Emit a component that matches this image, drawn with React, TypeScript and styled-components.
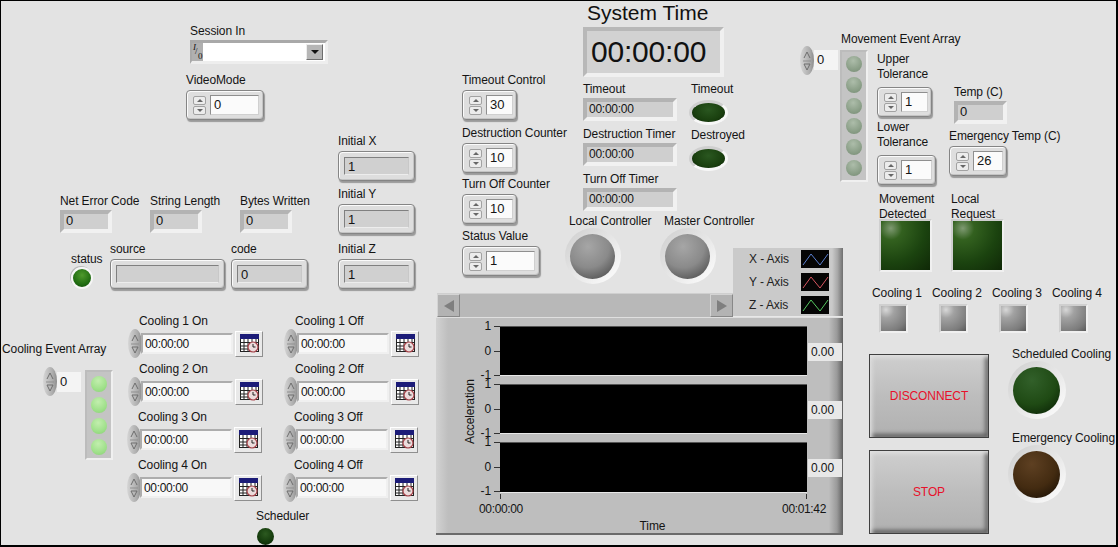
import React from 'react';
import styled, {createGlobalStyle} from 'styled-components';

const GlobalStyle = createGlobalStyle`
  html, body {
    margin: 0;
    padding: 0;
    background: #e3e3e3;
  }
  * {
    box-sizing: border-box;
  }
`;

function CalendarIcon() {
  return (
    <svg width="19" height="19" viewBox="0 0 19 19">
      <rect x="0.5" y="0.5" width="18" height="17" fill="#fff" stroke="#222" />
      <rect x="0" y="0" width="19" height="5" fill="#1c1c78" />
      <path
        d="M4 5v13M8 5v13M12 5v13M16 5v13M0 8.5h19M0 12h19M0 15h19"
        stroke="#222"
        strokeWidth="1"
      />
      <circle cx="13" cy="13" r="5" fill="#ecdcdc" stroke="#a8434a" strokeWidth="1.2" />
      <path d="M13 10v3h2.5" stroke="#222" strokeWidth="1" fill="none" />
    </svg>
  );
}

function Wave({color}: {color: string}) {
  return (
    <svg width="28" height="18" viewBox="0 0 28 18">
      <rect width="28" height="18" fill="#050505" />
      <path d="M2 15L10 4L19 15L27 4" stroke={color} strokeWidth="1" fill="none" />
    </svg>
  );
}

function Spin() {
  return (
    <SpinPair>
      <SpinCell>
        <UpArrow />
      </SpinCell>
      <SpinCell>
        <DownArrow />
      </SpinCell>
    </SpinPair>
  );
}

function OvalSpin() {
  return (
    <OvalButton>
      <svg width="8" height="22" viewBox="0 0 8 22">
        <path d="M1 8L4 2L7 8M1 14H7L4 20L1 14" fill="none" stroke="#6e6e6e" strokeWidth="1" />
        <path d="M0 11H8" stroke="#8f8f8f" />
      </svg>
    </OvalButton>
  );
}

function Numeric({value, width, innerWidth}: {value: string; width: number; innerWidth: number}) {
  return (
    <NumericFrame $width={width}>
      <Spin />
      <NumericInner $width={innerWidth}>{value}</NumericInner>
    </NumericFrame>
  );
}

function Scheduled({label, inset}: {label: string; inset?: boolean}) {
  return (
    <ScheduleCell $inset={inset}>
      <ScheduleLabel>{label}</ScheduleLabel>
      <ScheduleRow>
        <OvalSpin />
        <TimeBox>00:00:00</TimeBox>
        <CalendarButton>
          <CalendarIcon />
        </CalendarButton>
      </ScheduleRow>
    </ScheduleCell>
  );
}

function Strip({value, $last}: {value: string; $last?: boolean}) {
  return (
    <StripRow $last={$last}>
      <AxisNumbers>
        <AxisNumber>1</AxisNumber>
        <AxisNumber>0</AxisNumber>
        <AxisNumber>-1</AxisNumber>
      </AxisNumbers>
      <PlotArea />
      <Readout>{value}</Readout>
    </StripRow>
  );
}

export default function App() {
  return (
    <Panel>
      <GlobalStyle />

      <LeftColumn>
        <LeftTop>
          <ErrorCluster>
            <SessionField>
              <Label>Session In</Label>
              <SessionControl>
                <IoTag>
                  <i>I</i>
                  <span>/</span>
                  <b>0</b>
                </IoTag>
                <SessionInput />
                <DropButton>
                  <DropArrow />
                </DropButton>
              </SessionControl>
            </SessionField>
            <VideoField>
              <Label>VideoMode</Label>
              <Numeric value="0" width={78} innerWidth={49} />
            </VideoField>
            <CodeRow>
              <CodeField>
                <Label>Net Error Code</Label>
                <Sunken $width={52} $height={23}>0</Sunken>
              </CodeField>
              <CodeField>
                <Label>String Length</Label>
                <Sunken $width={52} $height={23}>0</Sunken>
              </CodeField>
              <CodeField>
                <Label>Bytes Written</Label>
                <Sunken $width={52} $height={23}>0</Sunken>
              </CodeField>
            </CodeRow>
            <StatusRow>
              <StatusField>
                <Label>status</Label>
                <StatusLed />
              </StatusField>
              <SourceField>
                <Label>source</Label>
                <Raised $width={115}>
                  <RaisedText />
                </Raised>
              </SourceField>
              <Field>
                <Label>code</Label>
                <Raised $width={77}>
                  <RaisedText>0</RaisedText>
                </Raised>
              </Field>
            </StatusRow>
          </ErrorCluster>
          <InitialColumn>
            <Field>
              <Label>Initial X</Label>
              <Raised $width={77}>
                <RaisedText>1</RaisedText>
              </Raised>
            </Field>
            <Field $top={6}>
              <Label>Initial Y</Label>
              <Raised $width={77}>
                <RaisedText>1</RaisedText>
              </Raised>
            </Field>
            <Field $top={8}>
              <Label>Initial Z</Label>
              <Raised $width={77}>
                <RaisedText>1</RaisedText>
              </Raised>
            </Field>
          </InitialColumn>
        </LeftTop>

        <CoolingArea>
          <EventColumn>
            <EventLabel>Cooling Event Array</EventLabel>
            <EventRow>
              <OvalSpin />
              <IndexBox $top={5}>0</IndexBox>
              <ArrayFrame $top={3}>
                <ArrayLed $on />
                <ArrayLed $on />
                <ArrayLed $on />
                <ArrayLed $on />
              </ArrayFrame>
            </EventRow>
          </EventColumn>
          <ScheduleColumn>
            <ScheduleGrid>
              <Scheduled label="Cooling 1 On" />
              <Scheduled label="Cooling 1 Off" />
              <Scheduled label="Cooling 2 On" />
              <Scheduled label="Cooling 2 Off" />
              <Scheduled label="Cooling 3 On" inset />
              <Scheduled label="Cooling 3 Off" inset />
              <Scheduled label="Cooling 4 On" inset />
              <Scheduled label="Cooling 4 Off" inset />
            </ScheduleGrid>
            <SchedulerField>
              <Label>Scheduler</Label>
              <SchedulerLed />
            </SchedulerField>
          </ScheduleColumn>
        </CoolingArea>
      </LeftColumn>

      <MiddleColumn>
        <MiddleTop>
          <MiddleLeft>
            <ControlsRow>
              <CounterColumn>
                <Field>
                  <Label>Timeout Control</Label>
                  <Numeric value="30" width={55} innerWidth={27} />
                </Field>
                <Field $top={6}>
                  <Label>Destruction Counter</Label>
                  <Numeric value="10" width={55} innerWidth={27} />
                </Field>
                <Field $top={4}>
                  <Label>Turn Off Counter</Label>
                  <Numeric value="10" width={55} innerWidth={27} />
                </Field>
                <Field $top={5}>
                  <Label>Status Value</Label>
                  <Numeric value="1" width={78} innerWidth={49} />
                </Field>
              </CounterColumn>
              <TimerArea>
                <ClockTitle>System Time</ClockTitle>
                <ClockBox>00:00:00</ClockBox>
                <TimerRow>
                  <TimerColumn>
                    <TimerField>
                      <Label>Timeout</Label>
                      <Sunken $width={94} $height={23} $small>00:00:00</Sunken>
                    </TimerField>
                    <TimerField $top={6}>
                      <Label>Destruction Timer</Label>
                      <Sunken $width={94} $height={23} $small>00:00:00</Sunken>
                    </TimerField>
                    <TimerField $top={6}>
                      <Label>Turn Off Timer</Label>
                      <Sunken $width={94} $height={23} $small>00:00:00</Sunken>
                    </TimerField>
                  </TimerColumn>
                  <AlarmColumn>
                    <AlarmField>
                      <AlarmLabel>Timeout</AlarmLabel>
                      <OvalLed />
                    </AlarmField>
                    <AlarmField $top={3}>
                      <AlarmLabel>Destroyed</AlarmLabel>
                      <OvalLed />
                    </AlarmField>
                  </AlarmColumn>
                </TimerRow>
                <ControllerRow>
                  <ControllerField>
                    <ControllerLabel>Local Controller</ControllerLabel>
                    <RoundLed $size={56} $tone="gray" />
                  </ControllerField>
                  <ControllerField>
                    <ControllerLabel>Master Controller</ControllerLabel>
                    <RoundLed $size={56} $tone="gray" />
                  </ControllerField>
                </ControllerRow>
              </TimerArea>
            </ControlsRow>
            <ScrollBar>
              <ScrollButton>
                <ScrollArrow $left />
              </ScrollButton>
              <ScrollButton>
                <ScrollArrow />
              </ScrollButton>
            </ScrollBar>
          </MiddleLeft>
          <LegendColumn>
            <Legend>
              <LegendRow>
                <span>X - Axis</span>
                <Wave color="#5b7fd0" />
              </LegendRow>
              <LegendRow>
                <span>Y - Axis</span>
                <Wave color="#d85560" />
              </LegendRow>
              <LegendRow>
                <span>Z - Axis</span>
                <Wave color="#55c860" />
              </LegendRow>
            </Legend>
          </LegendColumn>
        </MiddleTop>

        <Graph>
          <AxisTitleColumn>
            <AxisTitle>Acceleration</AxisTitle>
          </AxisTitleColumn>
          <Strips>
            <Strip value="0.00" />
            <Strip value="0.00" />
            <Strip value="0.00" $last />
            <TimeTicks>
              <TimeTick />
              <TimeTick />
            </TimeTicks>
            <TimeLabels>
              <span>00:00:00</span>
              <span>00:01:42</span>
            </TimeLabels>
            <TimeTitle>Time</TimeTitle>
          </Strips>
        </Graph>
      </MiddleColumn>

      <RightColumn>
        <MovementRow>
          <MovementIndex>
            <OvalSpin />
            <IndexBox $top={4}>0</IndexBox>
          </MovementIndex>
          <MovementArray>
            <MovementLabel>Movement Event Array</MovementLabel>
            <ArrayFrame>
              <ArrayLed />
              <ArrayLed />
              <ArrayLed />
              <ArrayLed />
              <ArrayLed />
              <ArrayLed />
            </ArrayFrame>
          </MovementArray>
          <ToleranceColumn>
            <Field>
              <WrapLabel>Upper<br />Tolerance</WrapLabel>
              <Numeric value="1" width={55} innerWidth={27} />
            </Field>
            <Field $top={3}>
              <WrapLabel>Lower<br />Tolerance</WrapLabel>
              <Numeric value="1" width={59} innerWidth={31} />
            </Field>
          </ToleranceColumn>
          <TempColumn>
            <TempField>
              <Label>Temp (C)</Label>
              <Sunken $width={53} $height={23}>0</Sunken>
            </TempField>
            <Field $top={5}>
              <Label>Emergency Temp (C)</Label>
              <Numeric value="26" width={58} innerWidth={30} />
            </Field>
          </TempColumn>
        </MovementRow>

        <SquareRow>
          <SquareField>
            <SquareLabel>Movement<br />Detected</SquareLabel>
            <SquareLed $size={53} $green />
          </SquareField>
          <SquareField>
            <SquareLabel>Local<br />Request</SquareLabel>
            <SquareLed $size={53} $green />
          </SquareField>
        </SquareRow>

        <CoolingRow>
          {['Cooling 1', 'Cooling 2', 'Cooling 3', 'Cooling 4'].map((name) => (
            <CoolingCell key={name}>
              <Label>{name}</Label>
              <SquareLed $size={29} />
            </CoolingCell>
          ))}
        </CoolingRow>

        <ActionRow>
          <ButtonColumn>
            <BigButton>DISCONNECT</BigButton>
            <BigButton>STOP</BigButton>
          </ButtonColumn>
          <StateColumn>
            <StateField>
              <StateLabel>Scheduled Cooling</StateLabel>
              <RoundLed $size={58} $tone="green" />
            </StateField>
            <StateField $top={12}>
              <StateLabel>Emergency Cooling</StateLabel>
              <RoundLed $size={58} $tone="brown" />
            </StateField>
          </StateColumn>
        </ActionRow>
      </RightColumn>
    </Panel>
  );
}

const Panel = styled.div`
  display: flex;
  width: 1118px;
  height: 547px;
  overflow: hidden;
  background: #e3e3e3;
  border-top: 1px solid #000;
  border-left: 1px solid #000;
  border-bottom: 2px solid #000;
  border-right: 2px solid #000;
  font-family: 'Liberation Sans', Arial, sans-serif;
  font-size: 12px;
  letter-spacing: -0.1px;
  color: #141414;
`;

const Label = styled.div`
  height: 14px;
  line-height: 14px;
  white-space: nowrap;
`;

const WrapLabel = styled.div`
  height: 29px;
  line-height: 15px;
  white-space: nowrap;
  margin-bottom: 3px;
`;

const Field = styled.div<{$top?: number}>`
  display: flex;
  flex-direction: column;
  align-items: flex-start;
  gap: 3px;
  margin-top: ${(p) => p.$top ?? 0}px;
`;

const NumericFrame = styled.div<{$width: number}>`
  display: flex;
  align-items: center;
  gap: 4px;
  width: ${(p) => p.$width}px;
  height: 30px;
  padding-left: 6px;
  background: #dedede;
  border: 1px solid #858585;
  border-radius: 4px;
  box-shadow: inset 1px 1px 0 #fbfbfb, inset -1px -1px 0 #c4c4c4, 1px 2px 1px #9a9a9a;
`;

const NumericInner = styled.div<{$width: number}>`
  width: ${(p) => p.$width}px;
  height: 20px;
  line-height: 18px;
  padding-left: 3px;
  background: #fbfbfb;
  border: 1px solid #8f8f8f;
  border-right-color: #d0d0d0;
  border-bottom-color: #d0d0d0;
  font-size: 13px;
`;

const SpinPair = styled.div`
  display: flex;
  flex-direction: column;
  gap: 1px;
  width: 13px;
`;

const SpinCell = styled.div`
  display: flex;
  align-items: center;
  justify-content: center;
  height: 9px;
  background: #ececec;
  border: 1px solid #a2a2a2;
  border-radius: 2px;
`;

const UpArrow = styled.div`
  border-left: 3px solid transparent;
  border-right: 3px solid transparent;
  border-bottom: 3px solid #666;
`;

const DownArrow = styled.div`
  border-left: 3px solid transparent;
  border-right: 3px solid transparent;
  border-top: 3px solid #666;
`;

const OvalButton = styled.div`
  display: flex;
  flex: none;
  align-items: center;
  justify-content: center;
  width: 14px;
  height: 29px;
  border-radius: 50%;
  background: linear-gradient(90deg, #d6d6d6, #acacac 70%, #8c8c8c);
`;

const Sunken = styled.div<{$width: number; $height: number; $small?: boolean}>`
  width: ${(p) => p.$width}px;
  height: ${(p) => p.$height}px;
  padding-left: 2px;
  line-height: 14px;
  background: #cfcfcf;
  border-style: solid;
  border-width: 4px;
  border-color: #b3b3b3 #f1f1f1 #f1f1f1 #b3b3b3;
  font-size: ${(p) => (p.$small ? 12 : 13)}px;
  letter-spacing: ${(p) => (p.$small ? -0.25 : 0)}px;
`;

const Raised = styled.div<{$width: number}>`
  width: ${(p) => p.$width}px;
  height: 30px;
  padding: 5px;
  background: #dedede;
  border: 1px solid #858585;
  border-radius: 4px;
  box-shadow: inset 1px 1px 0 #fbfbfb, inset -1px -1px 0 #c4c4c4, 1px 2px 1px #9a9a9a;
`;

const RaisedText = styled.div`
  height: 100%;
  padding-left: 3px;
  line-height: 18px;
  background: #d0d0d0;
  border: 1px solid #808080;
  border-right-color: #c8c8c8;
  border-bottom-color: #ededed;
  font-size: 13px;
`;

const LeftColumn = styled.div`
  flex: none;
  width: 434px;
`;

const LeftTop = styled.div`
  display: flex;
  height: 313px;
`;

const ErrorCluster = styled.div`
  flex: none;
  width: 337px;
  padding-top: 23px;
`;

const SessionField = styled(Field)`
  gap: 2px;
  margin-left: 189px;
`;

const SessionControl = styled.div`
  display: flex;
  align-items: center;
  width: 138px;
  height: 24px;
  background: #fff;
  border-style: solid;
  border-width: 3px 3px 3px 2px;
  border-color: #a9a9a9 #eeeeee #eeeeee #a9a9a9;
`;

const IoTag = styled.div`
  position: relative;
  flex: none;
  width: 11px;
  height: 18px;
  background: #b0b0b0;
  font-family: 'Liberation Serif', serif;
  font-size: 9px;
  line-height: 9px;
  color: #111;

  i {
    position: absolute;
    left: 1px;
    top: 0;
  }

  span {
    position: absolute;
    left: 3px;
    top: 4px;
  }

  b {
    position: absolute;
    left: 6px;
    top: 9px;
    font-weight: normal;
  }
`;

const SessionInput = styled.div`
  flex: 1;
  height: 18px;
  background: #fff;
`;

const DropButton = styled.div`
  display: flex;
  flex: none;
  align-items: center;
  justify-content: center;
  width: 17px;
  height: 16px;
  margin-right: 2px;
  background: #b6b6b6;
  border: 1px solid;
  border-color: #ededed #6e6e6e #6e6e6e #ededed;
`;

const DropArrow = styled.div`
  border-left: 4px solid transparent;
  border-right: 4px solid transparent;
  border-top: 4px solid #111;
`;

const VideoField = styled(Field)`
  margin: 9px 0 0 185px;
`;

const CodeRow = styled.div`
  display: flex;
  margin: 74px 0 0 59px;
`;

const CodeField = styled(Field)`
  gap: 2px;
  width: 90px;
`;

const StatusRow = styled.div`
  display: flex;
  margin: 9px 0 0 70px;
`;

const StatusField = styled.div`
  flex: none;
  width: 39px;
  margin-top: 10px;
`;

const StatusLed = styled.div`
  width: 22px;
  height: 22px;
  margin-top: 1px;
  border-radius: 50%;
  border: 2px solid #f6f6f6;
  box-shadow: -1px -1px 0 #b8b8b8;
  background: radial-gradient(circle at 50% 35%, #4f9a2c, #1e6a10 65%, #0f3f08);
`;

const SourceField = styled(Field)`
  width: 121px;
`;

const InitialColumn = styled.div`
  padding-top: 133px;
`;

const CoolingArea = styled.div`
  display: flex;
`;

const EventColumn = styled.div`
  flex: none;
  width: 127px;
  padding-top: 28px;
`;

const EventLabel = styled(Label)`
  margin-left: 1px;
`;

const EventRow = styled.div`
  display: flex;
  align-items: flex-start;
  margin: 11px 0 0 42px;
`;

const IndexBox = styled.div<{$top: number}>`
  width: 24px;
  height: 20px;
  margin-top: ${(p) => p.$top}px;
  padding-left: 3px;
  line-height: 19px;
  background: #f4f4f4;
  font-size: 13px;
`;

const ArrayFrame = styled.div<{$top?: number}>`
  display: flex;
  flex-direction: column;
  align-items: center;
  gap: 5px;
  margin: ${(p) => p.$top ?? 0}px 0 0 4px;
  width: 28px;
  padding: 4px 0 3px;
  background: #c4c4c4;
  border-style: solid;
  border-width: 2px;
  border-color: #bcbcbc #f0f0f0 #f0f0f0 #bcbcbc;
`;

const ArrayLed = styled.div<{$on?: boolean}>`
  width: 16px;
  height: 16px;
  border-radius: 50%;
  background: ${(p) =>
    p.$on
      ? 'radial-gradient(circle at 45% 30%, #c2eeae, #9fe08a 60%, #86cf72)'
      : 'radial-gradient(circle at 45% 30%, #adbdaa, #8b9f88 60%, #748a72)'};
`;

const ScheduleColumn = styled.div`
  display: flex;
  flex: none;
  flex-direction: column;
`;

const ScheduleGrid = styled.div`
  display: grid;
  grid-template-columns: 156px 156px;
  row-gap: 4px;
`;

const ScheduleCell = styled.div<{$inset?: boolean}>`
  margin-left: ${(p) => (p.$inset ? -1 : 0)}px;
`;

const ScheduleLabel = styled(Label)`
  margin: 0 0 1px 11px;
`;

const ScheduleRow = styled.div`
  display: flex;
  align-items: center;
  height: 29px;
`;

const TimeBox = styled.div`
  width: 92px;
  height: 21px;
  margin-left: -1px;
  padding-left: 2px;
  line-height: 18px;
  background: #f8f8f8;
  border-style: solid;
  border-width: 2px;
  border-color: #adadad #f0f0f0 #f0f0f0 #adadad;
  letter-spacing: -0.35px;
`;

const CalendarButton = styled.div`
  display: flex;
  align-items: center;
  justify-content: center;
  width: 28px;
  height: 26px;
  margin-left: 2px;
  background: #e9e9e9;
  border: 1px solid;
  border-color: #fff #8f8f8f #8f8f8f #fff;
`;

const SchedulerField = styled.div`
  margin: 7px 0 0 128px;
`;

const SchedulerLed = styled.div`
  width: 17px;
  height: 17px;
  margin: 5px 0 0 1px;
  border-radius: 50%;
  background: radial-gradient(circle at 50% 35%, #2c5a20, #143a0c 60%, #0a1e05);
`;

const MiddleColumn = styled.div`
  flex: none;
  width: 408px;
  display: flex;
  flex-direction: column;
`;

const MiddleTop = styled.div`
  display: flex;
`;

const MiddleLeft = styled.div`
  flex: none;
  width: 298px;
`;

const ControlsRow = styled.div`
  display: flex;
  height: 292px;
`;

const CounterColumn = styled.div`
  flex: none;
  width: 121px;
  margin-left: 27px;
  padding-top: 72px;
`;

const TimerArea = styled.div`
  flex: none;
  width: 150px;
`;

const ClockTitle = styled.div`
  height: 24px;
  margin-left: 4px;
  line-height: 24px;
  font-size: 21px;
  letter-spacing: 0;
  white-space: nowrap;
  color: #111;
`;

const ClockBox = styled.div`
  width: 141px;
  height: 50px;
  margin-top: 2px;
  padding-left: 4px;
  line-height: 41px;
  background: #d2d2d2;
  border-style: solid;
  border-width: 4px;
  border-color: #b8b8b8 #f0f0f0 #f0f0f0 #b8b8b8;
  font-size: 30px;
  letter-spacing: -0.2px;
  color: #111;
`;

const TimerRow = styled.div`
  display: flex;
  margin-top: 5px;
  height: 129px;
`;

const TimerColumn = styled.div`
  flex: none;
  width: 106px;
`;

const TimerField = styled(Field)`
  gap: 2px;
`;

const AlarmColumn = styled.div`
  flex: none;
  width: 60px;
`;

const AlarmField = styled.div<{$top?: number}>`
  margin-top: ${(p) => p.$top ?? 0}px;
`;

const AlarmLabel = styled(Label)`
  margin-left: 2px;
`;

const OvalLed = styled.div`
  width: 39px;
  height: 25px;
  margin-top: 4px;
  border-radius: 50%;
  border: 3px solid;
  border-color: #cfcfcf #f7f7f7 #f7f7f7 #cfcfcf;
  background: radial-gradient(ellipse at 50% 35%, #2a5720, #1a400f 60%, #0a2205);
`;

const ControllerRow = styled.div`
  display: flex;
  margin: 3px 0 0 -18px;
`;

const ControllerField = styled.div`
  flex: none;
  width: 95px;
`;

const ControllerLabel = styled(Label)`
  margin-left: 4px;
`;

const toneStops = {
  gray: '#a6a6a6, #8a8a8a 50%, #555 85%, #4a4a4a',
  green: '#32602a, #1f4a14 55%, #0e2a08 85%, #091d05',
  brown: '#5e4022, #432b11 55%, #221507 85%, #170e04',
};

const RoundLed = styled.div<{$size: number; $tone: keyof typeof toneStops}>`
  width: ${(p) => p.$size}px;
  height: ${(p) => p.$size}px;
  padding: 6px 6px 5px 5px;
  border-radius: 50%;
  background: linear-gradient(135deg, #cecece, #e6e6e6 50%, #ffffff);

  &::after {
    content: '';
    display: block;
    width: 100%;
    height: 100%;
    border-radius: 50%;
    background: radial-gradient(circle at 40% 28%, ${(p) => toneStops[p.$tone]});
  }
`;

const ScrollBar = styled.div`
  display: flex;
  justify-content: space-between;
  height: 24px;
  margin-left: 2px;
  background: #b8b8b8;
  border-top: 1px solid #cfcfcf;
`;

const ScrollButton = styled.div`
  display: flex;
  align-items: center;
  justify-content: center;
  width: 23px;
  background: #b3b3b3;
  border: 1px solid;
  border-color: #d4d4d4 #888 #888 #d4d4d4;
`;

const ScrollArrow = styled.div<{$left?: boolean}>`
  border-top: 6px solid transparent;
  border-bottom: 6px solid transparent;
  ${(p) =>
    p.$left
      ? 'border-right: 10px solid #7f7f7f;'
      : 'border-left: 10px solid #7f7f7f;'}
`;

const LegendColumn = styled.div`
  flex: none;
  width: 110px;
  padding-top: 247px;
`;

const Legend = styled.div`
  display: flex;
  flex-direction: column;
  gap: 5px;
  height: 69px;
  padding: 2px 14px 0 16px;
  background: linear-gradient(90deg, #cacaca 90%, #a8a8a8 95%, #6f6f6f);
  border-bottom: 1px solid #e8e8e8;
`;

const LegendRow = styled.div`
  display: flex;
  align-items: center;
  justify-content: space-between;
  height: 18px;
  color: #222;
`;

const Graph = styled.div`
  display: flex;
  width: 407px;
  height: 218px;
  margin-left: 1px;
  background: linear-gradient(90deg, #d2d2d2, #bebebe 3%, #bebebe 96.5%, #9a9a9a 98.5%, #5f5f5f);
  border-top: 1px solid #dfdfdf;
  border-bottom: 2px solid #6b6b6b;
`;

const AxisTitleColumn = styled.div`
  display: flex;
  flex: none;
  align-items: center;
  justify-content: flex-end;
  width: 41px;
  height: 185px;
`;

const AxisTitle = styled.div`
  writing-mode: vertical-rl;
  transform: rotate(180deg);
  height: 68px;
  line-height: 14px;
  margin-top: -2px;
  white-space: nowrap;
`;

const Strips = styled.div`
  flex: 1;
  padding-top: 8px;
`;

const StripRow = styled.div<{$last?: boolean}>`
  display: flex;
  height: ${(p) => (p.$last ? 51 : 50)}px;
  margin-bottom: ${(p) => (p.$last ? 0 : 8)}px;
`;

const AxisNumbers = styled.div`
  display: flex;
  flex: none;
  flex-direction: column;
  justify-content: space-between;
  width: 23px;
  height: 58px;
  margin-top: -4px;
`;

const AxisNumber = styled.div`
  display: flex;
  align-items: center;
  justify-content: flex-end;
  height: 9px;
  line-height: 9px;

  &::after {
    content: '';
    width: 6px;
    height: 1px;
    margin-left: 3px;
    background: #333;
  }
`;

const PlotArea = styled.div`
  flex: none;
  width: 307px;
  background: #000;
  border-top: 1px solid #555;
  border-bottom: 1px solid #e8e8e8;
`;

const Readout = styled.div`
  flex: none;
  align-self: flex-start;
  width: 34px;
  height: 18px;
  margin: 17px 0 0 1px;
  padding-left: 3px;
  line-height: 18px;
  background: #e8e8e8;
`;

const TimeTicks = styled.div`
  display: flex;
  justify-content: space-between;
  width: 307px;
  margin: 1px 0 0 23px;
`;

const TimeTick = styled.div`
  width: 1px;
  height: 5px;
  background: #333;
`;

const TimeLabels = styled.div`
  display: flex;
  justify-content: space-between;
  width: 347px;
  margin: 3px 0 0 2px;
  line-height: 14px;
  letter-spacing: -0.35px;
`;

const TimeTitle = styled.div`
  width: 347px;
  margin: 3px 0 0 2px;
  text-align: center;
  line-height: 14px;
`;

const RightColumn = styled.div`
  flex: none;
  width: 318px;
  margin-left: -43px;
`;

const MovementRow = styled.div`
  display: flex;
  align-items: flex-start;
  height: 183px;
`;

const MovementIndex = styled.div`
  display: flex;
  flex: none;
  align-items: flex-start;
  width: 40px;
  padding-top: 45px;
`;

const MovementArray = styled.div`
  flex: none;
  width: 28px;
  padding-top: 31px;

  ${ArrayFrame} {
    height: 132px;
    margin: 4px 0 0;
    gap: 0;
    justify-content: space-between;
    padding: 4px 0;
  }
`;

const MovementLabel = styled(Label)`
  margin-left: 1px;
`;

const ToleranceColumn = styled.div`
  flex: none;
  width: 72px;
  margin-left: 9px;
  padding-top: 51px;
`;

const TempColumn = styled.div`
  flex: none;
  padding-top: 84px;
`;

const TempField = styled(Field)`
  gap: 2px;
  margin-left: 5px;
`;

const SquareRow = styled.div`
  display: flex;
  margin: 8px 0 0 79px;
  gap: 19px;
`;

const SquareField = styled.div`
  flex: none;
  width: 53px;
`;

const SquareLabel = styled.div`
  height: 30px;
  line-height: 15px;
  margin-bottom: -3px;
  white-space: nowrap;
`;

const SquareLed = styled.div<{$size: number; $green?: boolean}>`
  width: ${(p) => p.$size}px;
  height: ${(p) => p.$size}px;
  border: 2px solid #f0f0f0;
  border-top-color: #cfcfcf;
  border-left-color: #cfcfcf;
  background: ${(p) =>
    p.$green
      ? 'radial-gradient(circle at 20% 15%, #7f9a72 0, #33611f 20%, #1b430f 60%, #0f2807)'
      : 'radial-gradient(circle at 20% 15%, #d8d8d8 0, #a2a2a2 28%, #7c7c7c 75%, #5a5a5a)'};
`;

const CoolingRow = styled.div`
  display: flex;
  margin: 14px 0 0 72px;
`;

const CoolingCell = styled(Field)`
  gap: 4px;
  width: 60px;

  ${SquareLed} {
    margin-left: 7px;
  }
`;

const ActionRow = styled.div`
  display: flex;
  margin: 21px 0 0 69px;
`;

const ButtonColumn = styled.div`
  display: flex;
  flex: none;
  flex-direction: column;
  gap: 12px;
  width: 120px;
`;

const BigButton = styled.div`
  display: flex;
  align-items: center;
  justify-content: center;
  height: 84px;
  background: linear-gradient(180deg, #cfcfcf, #bdbdbd 50%, #b0b0b0);
  border: 1px solid #3f3f3f;
  box-shadow: inset 0 4px 4px -2px #e4e4e4, inset 4px 0 4px -2px #e0e0e0,
    inset 0 -5px 4px -2px #5e5e5e, inset -5px 0 4px -2px #6a6a6a;
  color: #e8102a;
`;

const StateColumn = styled.div`
  flex: none;
  width: 110px;
  margin: -7px 0 0 19px;
`;

const StateField = styled.div<{$top?: number}>`
  margin-top: ${(p) => p.$top ?? 0}px;
`;

const StateLabel = styled(Label)`
  margin-left: 4px;
`;
